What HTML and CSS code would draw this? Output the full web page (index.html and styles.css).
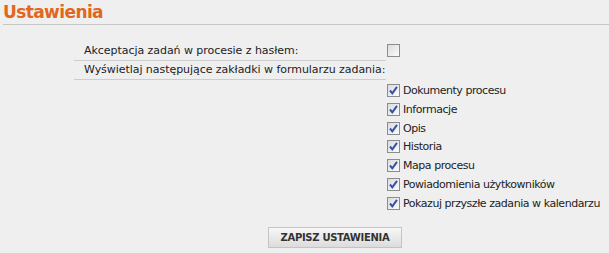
FILE: index.html
```html
<!DOCTYPE html>
<html lang="pl">
<head>
    <meta charset="UTF-8">
    <title>Ustawienia</title>
    <link rel="stylesheet" href="styles.css">
</head>
<body>
    <h2 class="title">Ustawienia</h2>
    <div class="settings">
        <div class="row">
            <div class="label">Akceptacja zadań w procesie z hasłem:</div>
            <div class="value"><span class="box"></span></div>
        </div>
        <div class="row">
            <div class="label">Wyświetlaj następujące zakładki w formularzu zadania:</div>
            <div class="value"></div>
        </div>
        <div class="row">
            <div class="spacer"></div>
            <ul class="tabs">
                <li><span class="box checked"><svg viewBox="0 0 11 11"><path d="M2 5.5 L4.3 8.3 L9 1.8" /></svg></span>Dokumenty procesu</li>
                <li><span class="box checked"><svg viewBox="0 0 11 11"><path d="M2 5.5 L4.3 8.3 L9 1.8" /></svg></span>Informacje</li>
                <li><span class="box checked"><svg viewBox="0 0 11 11"><path d="M2 5.5 L4.3 8.3 L9 1.8" /></svg></span>Opis</li>
                <li><span class="box checked"><svg viewBox="0 0 11 11"><path d="M2 5.5 L4.3 8.3 L9 1.8" /></svg></span>Historia</li>
                <li><span class="box checked"><svg viewBox="0 0 11 11"><path d="M2 5.5 L4.3 8.3 L9 1.8" /></svg></span>Mapa procesu</li>
                <li><span class="box checked"><svg viewBox="0 0 11 11"><path d="M2 5.5 L4.3 8.3 L9 1.8" /></svg></span>Powiadomienia użytkowników</li>
                <li><span class="box checked"><svg viewBox="0 0 11 11"><path d="M2 5.5 L4.3 8.3 L9 1.8" /></svg></span>Pokazuj przyszłe zadania w kalendarzu</li>
            </ul>
        </div>
        <div class="buttons_container">
            <button class="save">ZAPISZ USTAWIENIA</button>
        </div>
    </div>
</body>
</html>
```

FILE: styles.css
```css
body{
    margin: 0;
    background: #efefef;
    font-family: "DejaVu Sans", Verdana, sans-serif;
    font-size: 11px;
    color: #222;
}

.title{
    margin: 0 0 0 3px;
    padding-top: 2px;
    height: 22px;
    color: #e2661c;
    font-size: 17px;
    font-weight: bold;
    letter-spacing: -0.6px;
    border-bottom: 1px solid #c6c6c6;
}

.settings{
    padding-top: 17px;
}

    .settings > .row{
        display: flex;
    }

        .row > .label{
            width: 302px;
            margin-left: 74px;
            padding-left: 10px;
            height: 18px;
            line-height: 18px;
            border-bottom: 1px solid #cdcdcd;
            letter-spacing: -0.05px;
            white-space: nowrap;
        }

        .row > .spacer{
            width: 387px;
            flex-shrink: 0;
        }

        .row > .value{
            padding-left: 1px;
            padding-top: 2px;
        }

.box{
    display: inline-block;
    box-sizing: border-box;
    width: 13px;
    height: 13px;
    border: 1px solid #8c8c8c;
    background: linear-gradient(135deg, #dcdcdc, #fbfbfb);
    vertical-align: top;
}

    .box > svg{
        display: block;
        width: 11px;
        height: 11px;
    }

        .box > svg > path{
            fill: none;
            stroke: #3553a5;
            stroke-width: 2;
        }

.tabs{
    list-style: none;
    margin: 0;
    padding: 0;
}

    .tabs > li{
        height: 18.8px;
        padding-top: 4px;
        box-sizing: border-box;
        line-height: 14px;
        letter-spacing: -0.45px;
        white-space: nowrap;
    }

        .tabs > li > .box{
            margin-right: 3px;
        }

.buttons_container{
    text-align: center;
    padding-top: 15px;
    padding-left: 61px;
}

    .buttons_container > .save{
        font-family: "DejaVu Sans", Verdana, sans-serif;
        font-size: 10px;
        font-weight: bold;
        color: #333;
        height: 21px;
        width: 134px;
        border: 1px solid #c4c4c4;
        background: linear-gradient(#f7f7f7, #dcdcdc);
        letter-spacing: -0.3px;
    }
```
